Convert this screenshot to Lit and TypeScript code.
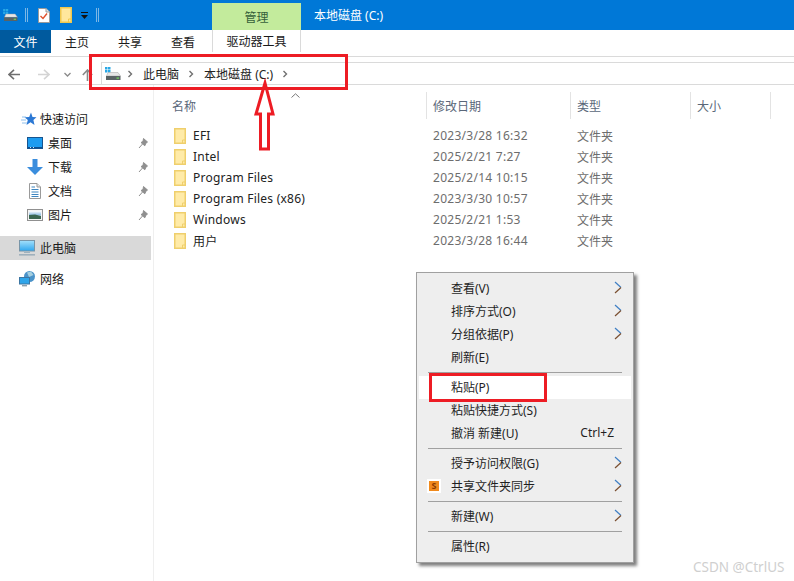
import { LitElement, html, css } from "lit";
import { customElement } from "lit/decorators.js";

const driveIcon = (w = 16, h = 13) => html`<svg width=${w} height=${h} viewBox="0 0 16 13">
  <rect x="0" y="0" width="2.5" height="2.5" fill="#29a8e6"/><rect x="3" y="0" width="2.5" height="2.5" fill="#29a8e6"/>
  <rect x="0" y="3" width="2.5" height="2.5" fill="#29a8e6"/><rect x="3" y="3" width="2.5" height="2.5" fill="#29a8e6"/>
  <path d="M3 5.5H13L15.5 9H1.5Z" fill="#e6e6e6" stroke="#a5a5a5" stroke-width=".5"/>
  <rect x="1" y="9" width="14.5" height="4" fill="#5a6365"/><rect x="11.5" y="10.5" width="2.5" height="1.2" fill="#6fdc5a"/>
</svg>`;

const folderIcon = html`<svg width="13" height="16" viewBox="0 0 13 16">
  <path d="M.75.75H11.25V15.25H.75Z" fill="#ffeba8" stroke="#efcf6c" stroke-width="1.5"/>
  <path d="M8.5 15V12H11.5" fill="none" stroke="#efcf6c"/>
</svg>`;

const pinIcon = html`<svg width="10" height="11" viewBox="0 0 10 11"><path d="M5.5.5 9.5 4 8 5 6.8 7.8 3 4.5 5 3.5ZM4.5 6 1 10" fill="#8f8f8f" stroke="#8f8f8f"/></svg>`;

const sideIcons: Record<string, unknown> = {
  star: html`<svg width="16" height="14" viewBox="0 0 16 14"><path d="M10 .5 11.5 5 15.5 5.3 12.4 8 13.5 13 9.5 10.2 5.5 13 6.8 8 3.5 5.3 8.2 5Z" fill="#2b78d4"/><path d="M1 5H5M0 8H5M1 11H6" stroke="#8fc0ec"/></svg>`,
  desktop: html`<svg width="16" height="12" viewBox="0 0 16 12"><rect x=".5" y=".5" width="15" height="11" fill="#1d9cf0" stroke="#17548f"/><path d="M1 10.5H15" stroke="#0b4f8e"/><path d="M3 10.5H4M6 10.5H7" stroke="#cfe8fa"/></svg>`,
  down: html`<svg width="16" height="16" viewBox="0 0 16 16"><path d="M5.5 0H10.5V8H16L8 16 0 8H5.5Z" fill="#3a8ddd"/></svg>`,
  doc: html`<svg width="12" height="16" viewBox="0 0 12 16"><path d="M.5.5H8L11.5 4V15.5H.5Z" fill="#fff" stroke="#9a9a9a"/><path d="M8 .5V4H11.5" fill="#e8e8e8" stroke="#9a9a9a"/><path d="M2.5 4H6M2.5 6.5H9.5M2.5 9H9.5M2.5 11.5H9.5M2.5 13.5H9.5" stroke="#3f86c0"/></svg>`,
  pic: html`<svg width="16" height="12" viewBox="0 0 16 12"><defs><linearGradient id="sky" x1="0" y1="0" x2="0" y2="1"><stop offset="0" stop-color="#fff"/><stop offset="1" stop-color="#7fb4dd"/></linearGradient></defs><rect x=".5" y=".5" width="15" height="11" fill="#f4f4f4" stroke="#909090"/><rect x="2" y="2" width="12" height="4.5" fill="url(#sky)"/><path d="M2 6 8 5.5 14 7V10H2Z" fill="#3a6650"/></svg>`,
  pc: html`<svg width="16" height="16" viewBox="0 0 16 16"><defs><linearGradient id="scr" x1="0" y1="0" x2="0" y2="1"><stop offset="0" stop-color="#a4e0fb"/><stop offset="1" stop-color="#2ea6ee"/></linearGradient></defs><rect x=".5" y=".5" width="15" height="10.5" fill="url(#scr)" stroke="#7895a8"/><rect x="5" y="12" width="6" height="1" fill="#a0b2be"/><rect x="0" y="14" width="16" height="1.6" fill="#9fb0bc"/></svg>`,
  net: html`<svg width="16" height="16" viewBox="0 0 16 16"><circle cx="10.5" cy="5.5" r="5.5" fill="#4b93c9"/><path d="M8 1.5 12 .5 14.5 4 10 6Z" fill="#a5cfe0"/><rect x=".5" y="6.5" width="10" height="6.5" fill="#2fa5ea" stroke="#3c76a3"/><rect x="3" y="14" width="5" height="1.4" fill="#8ca0ad"/></svg>`,
};

const chev = html`<svg class="crumb" width="6" height="8" viewBox="0 0 6 8"><path d="M1.5 1 4.5 4 1.5 7" fill="none" stroke="#707070" stroke-width="1.4"/></svg>`;

const sideItems = [
  { icon: "desktop", label: "桌面" },
  { icon: "down", label: "下载" },
  { icon: "doc", label: "文档" },
  { icon: "pic", label: "图片" },
];

const files = [
  ["EFI", "2023/3/28 16:32"],
  ["Intel", "2025/2/21 7:27"],
  ["Program Files", "2025/2/14 10:15"],
  ["Program Files (x86)", "2023/3/30 10:57"],
  ["Windows", "2025/2/21 1:53"],
  ["用户", "2023/3/28 16:44"],
];

type M = { t?: string; sub?: boolean; hot?: boolean; key?: string; icon?: boolean; sep?: boolean };
const menu: M[] = [
  { t: "查看(V)", sub: true },
  { t: "排序方式(O)", sub: true },
  { t: "分组依据(P)", sub: true },
  { t: "刷新(E)" },
  { sep: true },
  { t: "粘贴(P)", hot: true },
  { t: "粘贴快捷方式(S)" },
  { t: "撤消 新建(U)", key: "Ctrl+Z" },
  { sep: true },
  { t: "授予访问权限(G)", sub: true },
  { t: "共享文件夹同步", sub: true, icon: true },
  { sep: true },
  { t: "新建(W)", sub: true },
  { sep: true },
  { t: "属性(R)" },
];

@customElement("app-root")
export class AppRoot extends LitElement {
  static styles = css`
    :host { display: block; position: relative; width: 794px; height: 581px; overflow: hidden; background: #fff;
      font: 12px "Noto Sans", "Noto Sans CJK SC", sans-serif; color: #1a1a1a; }
    .title { height: 30px; background: #0078d7; display: flex; align-items: center; padding-left: 3px; }
    .title .q { display: flex; align-items: center; width: 209px; }
    .vsep { width: 3px; height: 14px; border: 1px solid #9cc7ea; border-width: 0 1px; opacity: .8; box-sizing: border-box; }
    .manage { align-self: flex-end; width: 89px; height: 27px; background: #c3eb9c; color: #35603a; display: flex; align-items: center; justify-content: center; }
    .wintitle { color: #fff; margin-left: 13px; }
    .tabs { height: 26px; display: flex; border-bottom: 1px solid #dadada; }
    .file { width: 51px; height: 23px; background: #005a9e; color: #fff; display: flex; align-items: center; justify-content: center; }
    .tab { height: 23px; display: flex; align-items: center; width: 53px; }
    .tab.first { margin-left: 14px; }
    .tools { margin-left: -12px; width: 87px; height: 22px; border: 1px solid #dadada; border-width: 0 1px; display: flex; align-items: center; justify-content: center; }
    .nav { height: 22px; margin-top: 5px; display: flex; border-bottom: 1px solid #dadada; }
    .btns { width: 101px; display: flex; align-items: center; padding-top: 3px; box-sizing: border-box; }
    .addr { flex: 1; border: 1px solid #dadada; border-width: 1px 0 0 1px; display: flex; align-items: center; padding-left: 3px; color: #222; }
    .crumb { margin: 0 10px 0 6px; }
    .addr span { padding-right: 3px; }
    .main { display: flex; height: 496px; }
    .side { width: 153px; border-right: 1px solid #efefef; padding-top: 22px; }
    .sitem { height: 24px; display: flex; align-items: center; }
    .sitem .ic { width: 16px; display: flex; justify-content: center; }
    .head { padding-left: 21px; gap: 3px; }
    .sub { padding-left: 27px; gap: 5px; }
    .sub .pin { margin-left: auto; margin-right: 5px; display: flex; }
    .pc { padding-left: 19px; gap: 5px; background: #d9d9d9; margin: 9px 2px 0 0; }
    .netw { padding-left: 19px; gap: 5px; margin-top: 7px; }
    .content { flex: 1; }
    .hdr { height: 27px; margin-top: 7px; display: grid; grid-template-columns: 272px 144px 120px 81px; color: #5a6779; position: relative; }
    .hdr div { padding-left: 18px; padding-top: 5px; }
    .hdr div + div { padding-left: 6px; border-left: 1px solid #e3e3e3; }
    .hdr .last { border-right: 1px solid #e3e3e3; }
    .sort { position: absolute; left: 137px; top: 1px; }
    .rows { padding-top: 6px; }
    .row { height: 21px; display: grid; grid-template-columns: 272px 144px 120px; align-items: center; color: #6d6d6d; }
    .row .name { display: flex; align-items: center; gap: 6px; padding-left: 20px; color: #222; letter-spacing: .23px; }
    .row .d { padding-left: 7px; }
    .row .date { letter-spacing: .27px; }
    .menu { position: absolute; left: 416px; top: 272px; width: 218px; box-sizing: border-box; background: #eee; border: 1px solid #a0a0a0; box-shadow: 3px 3px 3px rgba(0,0,0,.5); padding: 4px 2px; }
    .mi { height: 23px; box-sizing: border-box; padding: 0 9px 2px 32px; display: flex; align-items: center; position: relative; color: #1f1f1f; }
    .mi.hot { background: #fff; }
    .mi .k { margin-left: auto; margin-right: 8px; }
    .mi .arrow { margin-left: auto; }
    .mi .badge { position: absolute; left: 9px; top: 5px; width: 10px; height: 10px; background: #f08a1d; border: 1px solid #fff; outline: 1px solid #fff; color: #8a3a00; font-size: 9px; line-height: 10px; text-align: center; font-weight: 700; }
    .ms { height: 7px; display: flex; align-items: center; padding: 0 9px; }
    .ms i { flex: 1; height: 1px; background: #a0a0a0; }
    .redbox { position: absolute; border: 3px solid #ed1c24; box-sizing: border-box; }
    .r1 { left: 89px; top: 54px; width: 259px; height: 36px; }
    .r2 { left: 429px; top: 373px; width: 118px; height: 29px; }
    .arrowup { position: absolute; left: 250px; top: 78px; }
    .wm { position: absolute; left: 693px; top: 558px; font-size: 13.5px; color: #cfcfcf; white-space: nowrap; }
  `;

  render() {
    return html`
      <div class="title">
        <div class="q">
          ${driveIcon(15, 12)}
          <span class="vsep" style="margin-left:7px"></span>
          <svg style="margin-left:10px" width="12" height="15" viewBox="0 0 12 15"><path d="M.5.5H8L11.5 4V14.5H.5Z" fill="#fff" stroke="#9a9a9a"/><path d="M8 .5V4H11.5" fill="#e4e4e4" stroke="#9a9a9a"/><path d="M2.5 8 5 10.5 9 5.5" fill="none" stroke="#e0502c" stroke-width="1.4"/></svg>
          <svg style="margin-left:10px" width="13" height="16" viewBox="0 0 13 16"><path d="M.75.75H11.25V15.25H.75Z" fill="#ffe79c" stroke="#f0c84e" stroke-width="1.5"/><path d="M8.5 15V12H11.5" fill="none" stroke="#f0c84e"/></svg>
          <svg style="margin-left:8px" width="7" height="7" viewBox="0 0 7 7"><rect width="7" height="1" fill="#111"/><path d="M0 3H7L3.5 7Z" fill="#111"/></svg>
          <span class="vsep" style="margin-left:8px"></span>
        </div>
        <div class="manage">管理</div>
        <div class="wintitle">本地磁盘 (C:)</div>
      </div>
      <div class="tabs">
        <div class="file">文件</div>
        <div class="tab first">主页</div>
        <div class="tab">共享</div>
        <div class="tab">查看</div>
        <div class="tools">驱动器工具</div>
      </div>
      <div class="nav">
        <div class="btns">
          <svg style="margin-left:8px" width="12" height="11" viewBox="0 0 12 11"><path d="M6 .8 1 5.5 6 10.2M1 5.5H12" fill="none" stroke="#6f6f6f" stroke-width="1.6"/></svg>
          <svg style="margin-left:18px" width="12" height="11" viewBox="0 0 12 11"><path d="M6 .8 11 5.5 6 10.2M11 5.5H0" fill="none" stroke="#d4d4d4" stroke-width="1.6"/></svg>
          <svg style="margin-left:14px" width="7" height="5" viewBox="0 0 7 5"><path d="M.5 1 3.5 4 6.5 1" fill="none" stroke="#8a8a8a" stroke-width="1.3"/></svg>
          <svg style="margin-left:11px" width="11" height="12" viewBox="0 0 11 12"><path d="M.8 6 5.5 1 10.2 6M5.5 1V12" fill="none" stroke="#8a8a8a" stroke-width="1.6"/></svg>
        </div>
        <div class="addr">
          ${driveIcon(16, 13)}${chev}<span>此电脑</span>${chev}<span>本地磁盘 (C:)</span>${chev}
        </div>
      </div>
      <div class="main">
        <div class="side">
          <div class="sitem head"><span class="ic">${sideIcons.star}</span>快速访问</div>
          ${sideItems.map((s) => html`<div class="sitem sub"><span class="ic">${sideIcons[s.icon]}</span>${s.label}<span class="pin">${pinIcon}</span></div>`)}
          <div class="sitem pc"><span class="ic">${sideIcons.pc}</span>此电脑</div>
          <div class="sitem netw"><span class="ic">${sideIcons.net}</span>网络</div>
        </div>
        <div class="content">
          <div class="hdr">
            <div>名称</div><div>修改日期</div><div>类型</div><div class="last">大小</div>
            <svg class="sort" width="9" height="5" viewBox="0 0 9 5"><path d="M.5 4.5 4.5 .8 8.5 4.5" fill="none" stroke="#777"/></svg>
          </div>
          <div class="rows">
            ${files.map(([n, d]) => html`<div class="row"><div class="name">${folderIcon}${n}</div><div class="d date">${d}</div><div class="d">文件夹</div></div>`)}
          </div>
        </div>
      </div>
      <div class="menu">
        ${menu.map((m) => m.sep
          ? html`<div class="ms"><i></i></div>`
          : html`<div class="mi ${m.hot ? "hot" : ""}">
              ${m.icon ? html`<span class="badge">S</span>` : ""}
              ${m.t}
              ${m.key ? html`<span class="k">${m.key}</span>` : ""}
              ${m.sub ? html`<svg class="arrow" width="8" height="13" viewBox="0 0 8 13"><path d="M1 1 7 6.5" fill="none" stroke="#3f7fc4" stroke-width="1.2"/><path d="M7 6.5 1 12" fill="none" stroke="#7a4f30" stroke-width="1.2"/></svg>` : ""}
            </div>`)}
      </div>
      <div class="redbox r1"></div>
      <div class="redbox r2"></div>
      <svg class="arrowup" width="30" height="76" viewBox="0 0 30 76"><path d="M15 5 23 36H18.5V71H10.5V36H6Z" fill="none" stroke="#ed1c24" stroke-width="3"/></svg>
      <div class="wm">CSDN @CtrlUS</div>
    `;
  }
}
